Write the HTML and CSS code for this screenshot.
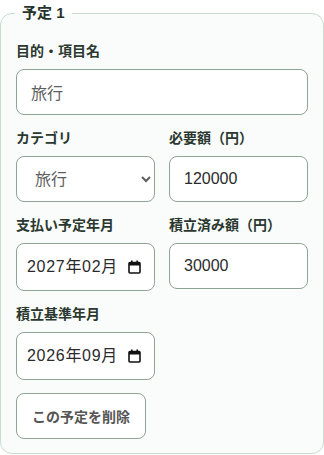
FILE: index.html
```html
<!DOCTYPE html>
<html lang="ja">
<head>
    <meta charset="UTF-8">
    <meta name="viewport" content="width=device-width, initial-scale=1.0">
    <title>予定</title>
    <link rel="stylesheet" href="styles.css">
</head>
<body>
    <fieldset class="plan">
        <legend>予定 1</legend>

        <div class="field">
            <label for="title1">目的・項目名</label>
            <input type="text" id="title1" class="text-muted" value="旅行">
        </div>

        <div class="row">
            <div class="field">
                <label for="cat1">カテゴリ</label>
                <select id="cat1" class="text-muted">
                    <option selected>旅行</option>
                    <option>家電</option>
                    <option>教育</option>
                    <option>その他</option>
                </select>
            </div>
            <div class="field">
                <label for="need1">必要額（円）</label>
                <input type="number" id="need1" value="120000">
            </div>
        </div>

        <div class="row">
            <div class="field">
                <label for="pay1">支払い予定年月</label>
                <div class="month-box">
                    <input type="text" id="pay1" value="2027年02月">
                    <svg class="cal" width="13" height="14" viewBox="0 0 13 14">
                        <rect x="1" y="2.5" width="11" height="10.5" rx="1" fill="none" stroke="#111" stroke-width="1.6"/>
                        <rect x="1" y="2.5" width="11" height="3" fill="#111"/>
                        <rect x="3" y="0.5" width="1.6" height="3" fill="#111"/>
                        <rect x="8.4" y="0.5" width="1.6" height="3" fill="#111"/>
                    </svg>
                </div>
            </div>
            <div class="field">
                <label for="saved1">積立済み額（円）</label>
                <input type="number" id="saved1" value="30000">
            </div>
        </div>

        <div class="row">
            <div class="field">
                <label for="base1">積立基準年月</label>
                <div class="month-box">
                    <input type="text" id="base1" value="2026年09月">
                    <svg class="cal" width="13" height="14" viewBox="0 0 13 14">
                        <rect x="1" y="2.5" width="11" height="10.5" rx="1" fill="none" stroke="#111" stroke-width="1.6"/>
                        <rect x="1" y="2.5" width="11" height="3" fill="#111"/>
                        <rect x="3" y="0.5" width="1.6" height="3" fill="#111"/>
                        <rect x="8.4" y="0.5" width="1.6" height="3" fill="#111"/>
                    </svg>
                </div>
            </div>
        </div>

        <button type="button" class="remove">この予定を削除</button>
    </fieldset>
</body>
</html>
```

FILE: styles.css
```css
body {
    margin: 0;
    background: #fff;
    font-family: "Liberation Sans", "Noto Sans CJK JP", sans-serif;
    color: #2b3830;
}
.plan {
    margin: 0;
    padding: 15px 15px 14px;
    border: 1px solid #c9dccf;
    border-radius: 12px;
    background: #f9fcfa;
}
legend {
    padding: 0 7px;
    margin-left: -1px;
    font-size: 15px;
    font-weight: bold;
    line-height: 26px;
    color: #26332b;
}
.field {
    display: flex;
    flex-direction: column;
    gap: 8px;
    margin-bottom: 13px;
    min-width: 0;
}
.field label {
    font-size: 14px;
    font-weight: bold;
    line-height: 20px;
}
.row {
    display: grid;
    grid-template-columns: 1fr 1fr;
    column-gap: 14px;
    align-items: start;
}
input,
select {
    box-sizing: border-box;
    width: 100%;
    height: 46px;
    padding: 10px 14px;
    border: 1px solid #8fa396;
    border-radius: 8px;
    background: #fff;
    font: 16px/24px "Liberation Sans", "Noto Sans CJK JP", sans-serif;
    color: #2b2b2b;
}
.text-muted {
    color: #5e5e5e;
}
.month-box {
    box-sizing: border-box;
    display: flex;
    align-items: center;
    height: 48px;
    padding: 0 13px 0 10px;
    border: 1px solid #8fa396;
    border-radius: 8px;
    background: #fff;
}
.month-box input {
    flex: 1;
    min-width: 0;
    height: auto;
    padding: 0;
    border: none;
    border-radius: 0;
    background: none;
    outline: none;
    letter-spacing: 0.7px;
}
.cal {
    flex: none;
}
.remove {
    height: 46px;
    padding: 0 15px;
    border: 1px solid #8fa396;
    border-radius: 8px;
    background: #fff;
    font: bold 14px "Liberation Sans", "Noto Sans CJK JP", sans-serif;
    color: #555;
    cursor: pointer;
}
.remove:hover {
    background: #f1f6f2;
}
```
